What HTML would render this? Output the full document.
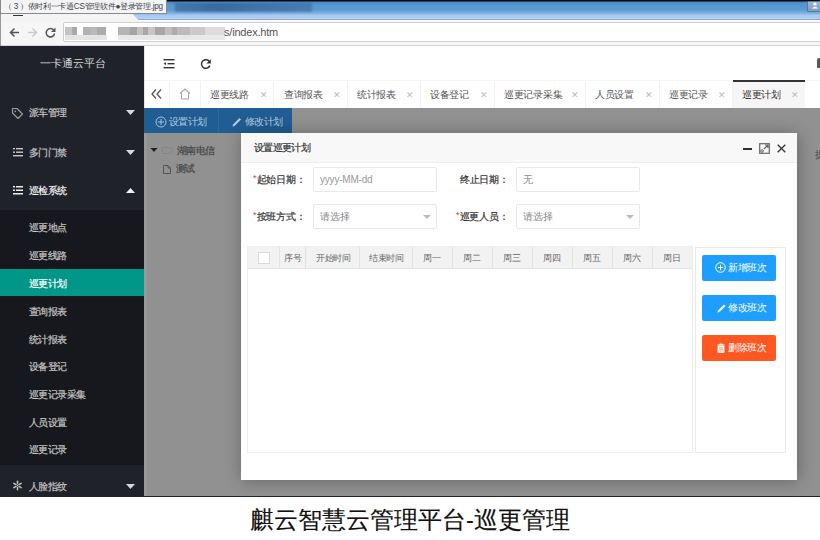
<!DOCTYPE html>
<html><head><meta charset="utf-8">
<style>
*{margin:0;padding:0;box-sizing:border-box}
html,body{width:820px;height:540px;overflow:hidden;background:#fff;font-family:"Liberation Sans",sans-serif;color:#333}
.a{position:absolute;white-space:nowrap}
#titlebar{left:0;top:0;width:820px;height:21px;background:linear-gradient(#05080f 0,#05080f 1px,#4a88c0 2px,#5797cf 5px,#5a9bd2 10px,#7db0e0 13px,#a9c9f0 15.5px,#b2cff5 18.5px,#93a8cc 19.5px,#f8fafc 20.5px)}
#ctab{left:0;top:13px;width:140px;height:9px;background:#f4f4f4;clip-path:polygon(0 0,132px 0,140px 100%,0 100%)}
#tip{left:0;top:0;width:167px;height:14px;background:#f4f4f6;border:1px solid #8a8a8a;border-top:none;font-size:8.2px;line-height:14px;color:#444;padding-left:3px;letter-spacing:-0.3px}
#btool{left:0;top:21px;width:820px;height:25px;background:#f6f6f6;border-bottom:1px solid #d4d4d4}
#addr{left:63px;top:22px;width:770px;height:20px;background:#fff;border:1px solid #cfcfcf;border-radius:2px}
#side{left:0;top:46px;width:144px;height:450px;background:#20222a}
#sub{left:0;top:210px;width:144px;height:255px;background:#17181d}
#hdr{left:144px;top:46px;width:676px;height:34px;background:#fff}
#tabs{left:144px;top:80px;width:676px;height:28px;background:#fff;border-top:1px solid #f6f6f6}
#content{left:144px;top:108px;width:676px;height:388px;background:#919191}
#modal{left:241px;top:133px;width:556px;height:347px;background:#fff;box-shadow:1px 1px 16px rgba(0,0,0,.3)}
#bottomline{left:0;top:496px;width:820px;height:1px;background:#222}
#caption{left:0px;top:505px;width:820px;text-align:center;font-size:23.5px;line-height:30px;color:#111;-webkit-text-stroke:0.15px #111}
.st{font-size:10px;letter-spacing:-0.6px;line-height:12px;color:#c4c4c4;-webkit-text-stroke:0.2px currentColor}
.nb{-webkit-text-stroke:0}
.tt{font-size:10px;letter-spacing:-0.3px;line-height:12px;color:#555}
.tx{font-size:9px;color:#bbb;line-height:10px}
.dv{width:1px;height:27px;top:81px;background:#f2f2f2}
.fl{font-size:10px;letter-spacing:-0.3px;line-height:12px;color:#333;-webkit-text-stroke:0.2px #333}
.rq{color:#e33;font-size:9px;margin-right:0.5px;position:relative;top:-2px;-webkit-text-stroke:0}
.inp{width:124px;height:25px;border:1px solid #e9e9e9;border-radius:2px;background:#fff;font-size:10px;line-height:23px;padding-left:6px;letter-spacing:-0.2px}
.cd{top:247px;width:1px;height:22px;background:#e2e2e2}
.th{top:252px;font-size:8.8px;letter-spacing:-0.5px;line-height:12px;color:#666}
.btn{width:74px;height:26px;border-radius:2px;color:#fff;font-size:10px;letter-spacing:-0.3px}
.btn span{position:absolute;top:7px;line-height:12px}
</style></head><body>
<div id="titlebar" class="a"></div>
<div class="a" style="left:807px;top:1px;width:14px;height:11px;background:linear-gradient(#9db8d6,#7f9ec2);border:1px solid #5d7796;border-radius:1px"></div>
<svg class="a" style="left:811px;top:2px" width="8" height="7" viewBox="0 0 8 7"><circle cx="4" cy="2" r="1.6" fill="#fff"/><path d="M0.8 6.5 Q4 2.8 7.2 6.5 Z" fill="#fff"/></svg>
<div class="a" style="left:175px;top:3px;width:137px;height:9px;background:linear-gradient(90deg,rgba(30,60,110,.35),rgba(30,60,110,.5) 30%,rgba(30,60,110,.4) 60%,rgba(30,60,110,.3));filter:blur(1.2px)"></div>
<div id="btool" class="a"></div>
<div id="ctab" class="a"></div>
<div id="tip" class="a">（ 3 ）依时利一卡通CS管理软件●登录管理.jpg</div>
<div class="a" style="left:13px;top:15px;width:10px;height:1px;background:#333"></div>
<div class="a" style="left:0;top:14px;width:1px;height:32px;background:#9a9a9a"></div>
<div id="addr" class="a"></div>
<!-- browser toolbar icons -->
<svg class="a" style="left:9px;top:27px" width="11" height="11" viewBox="0 0 11 11"><path d="M10 5.5 H1.5 M5.5 1.5 L1.5 5.5 L5.5 9.5" fill="none" stroke="#555" stroke-width="1.5"/></svg>
<svg class="a" style="left:27px;top:27px" width="11" height="11" viewBox="0 0 11 11"><path d="M1 5.5 H9.5 M5.5 1.5 L9.5 5.5 L5.5 9.5" fill="none" stroke="#ccc" stroke-width="1.5"/></svg>
<svg class="a" style="left:45px;top:27px" width="11" height="11" viewBox="0 0 11 11"><path d="M9 3.5 A4.2 4.2 0 1 0 9.6 6.5" fill="none" stroke="#555" stroke-width="1.5"/><path d="M10.5 0.5 L10.5 5 L6 5 Z" fill="#555"/></svg>
<div class="a" style="left:65px;top:27px;width:7px;height:8px;background:#c4c4c4"></div><div class="a" style="left:72px;top:27px;width:5px;height:8px;background:#a9a9a9"></div><div class="a" style="left:83px;top:27px;width:7px;height:8px;background:#b2b2b2"></div><div class="a" style="left:90px;top:27px;width:7px;height:8px;background:#bababa"></div><div class="a" style="left:97px;top:27px;width:9px;height:8px;background:#acacac"></div><div class="a" style="left:118px;top:27px;width:12px;height:8px;background:#b4b4b4"></div><div class="a" style="left:130px;top:27px;width:7px;height:8px;background:#a4a4a4"></div><div class="a" style="left:137px;top:27px;width:6px;height:8px;background:#c2c2c2"></div><div class="a" style="left:143px;top:27px;width:5px;height:8px;background:#a8a8a8"></div><div class="a" style="left:148px;top:27px;width:7px;height:8px;background:#c6c6c6"></div><div class="a" style="left:155px;top:27px;width:10px;height:8px;background:#a6a6a6"></div><div class="a" style="left:165px;top:27px;width:7px;height:8px;background:#c0c0c0"></div><div class="a" style="left:172px;top:27px;width:5px;height:8px;background:#acacac"></div><div class="a" style="left:177px;top:27px;width:13px;height:8px;background:#bcbcbc"></div><div class="a" style="left:190px;top:27px;width:15px;height:8px;background:#cacaca"></div><div class="a" style="left:205px;top:27px;width:20px;height:8px;background:#dcdcdc"></div><div class="a" style="left:65px;top:35px;width:42px;height:5px;background:#e4e4e4"></div><div class="a" style="left:118px;top:35px;width:107px;height:5px;background:#e8e8e8"></div>
<div class="a" style="left:224px;top:26px;font-size:11px;line-height:13px;color:#555;letter-spacing:-0.2px">s/index.htm</div>


<!-- sidebar -->
<div id="side" class="a"></div>
<div id="sub" class="a"></div>
<div class="a" style="left:0;top:269px;width:144px;height:27px;background:#009688"></div>
<div class="a st nb" style="left:40px;top:57px;font-size:11px;letter-spacing:-0.1px;color:#d8d8d8">一卡通云平台</div>
<div class="a st" style="left:29px;top:107px">派车管理</div>
<div class="a st" style="left:29px;top:147px">多门门禁</div>
<div class="a st" style="left:29px;top:185px;color:#f0f0f0">巡检系统</div>
<div class="a st" style="left:29px;top:222px">巡更地点</div>
<div class="a st" style="left:29px;top:250px">巡更线路</div>
<div class="a st" style="left:29px;top:278px;color:#fff">巡更计划</div>
<div class="a st" style="left:29px;top:306px">查询报表</div>
<div class="a st" style="left:29px;top:334px">统计报表</div>
<div class="a st" style="left:29px;top:361px">设备登记</div>
<div class="a st" style="left:29px;top:389px">巡更记录采集</div>
<div class="a st" style="left:29px;top:417px">人员设置</div>
<div class="a st" style="left:29px;top:444px">巡更记录</div>
<div class="a st" style="left:29px;top:481px">人脸指纹</div>


<!-- sidebar icons -->
<svg class="a" style="left:11px;top:107px" width="13" height="12" viewBox="0 0 13 12"><path d="M1.5 1.5 L6 1.5 L11.5 7 L7 11.5 L1.5 6 Z" fill="none" stroke="#9a9a9a" stroke-width="1.2" stroke-linejoin="round"/><circle cx="4.3" cy="4.3" r="0.9" fill="#9a9a9a"/></svg>
<svg class="a" style="left:13px;top:147px" width="10" height="10" viewBox="0 0 10 10"><rect x="0" y="1" width="2" height="1.4" fill="#c8c8c8"/><rect x="3" y="1" width="7" height="1.4" fill="#c8c8c8"/><rect x="0" y="4.5" width="2" height="1.4" fill="#c8c8c8"/><rect x="3" y="4.5" width="7" height="1.4" fill="#c8c8c8"/><rect x="0" y="8" width="10" height="1.4" fill="#c8c8c8"/></svg>
<svg class="a" style="left:13px;top:185px" width="10" height="10" viewBox="0 0 10 10"><rect x="0" y="1" width="2" height="1.5" fill="#eee"/><rect x="3" y="1" width="7" height="1.5" fill="#eee"/><rect x="0" y="4.5" width="2" height="1.5" fill="#eee"/><rect x="3" y="4.5" width="7" height="1.5" fill="#eee"/><rect x="0" y="8" width="10" height="1.5" fill="#eee"/></svg>
<svg class="a" style="left:12px;top:480px" width="11" height="11" viewBox="-5.5 -5.5 11 11"><g stroke="#c4c4c4" stroke-width="1.5" stroke-linecap="round"><path d="M0 -4.2 V4.2"/><path d="M-3.64 -2.1 L3.64 2.1"/><path d="M-3.64 2.1 L3.64 -2.1"/></g><circle r="1.3" fill="#20222a"/><circle r="0.7" fill="#c4c4c4"/></svg>
<svg class="a" style="left:126px;top:110px" width="9" height="5"><path d="M0 0 L9 0 L4.5 5 Z" fill="#d8d8d8"/></svg>
<svg class="a" style="left:126px;top:150px" width="9" height="5"><path d="M0 0 L9 0 L4.5 5 Z" fill="#d8d8d8"/></svg>
<svg class="a" style="left:126px;top:188px" width="9" height="5"><path d="M0 5 L9 5 L4.5 0 Z" fill="#f0f0f0"/></svg>
<svg class="a" style="left:126px;top:484px" width="9" height="5"><path d="M0 0 L9 0 L4.5 5 Z" fill="#d8d8d8"/></svg>

<!-- header -->
<div id="hdr" class="a"></div>
<div id="tabs" class="a"></div>
<div class="a" style="left:144px;top:46px;width:1px;height:62px;background:#e6e6e6"></div>
<svg class="a" style="left:163px;top:59px" width="12" height="10" viewBox="0 0 12 10"><rect x="0.5" y="0" width="11" height="1.4" fill="#333"/><rect x="4.5" y="4" width="7" height="1.4" fill="#333"/><path d="M0.5 4.7 L3 3.3 L3 6.1 Z" fill="#333"/><rect x="0.5" y="8" width="11" height="1.4" fill="#333"/></svg>
<svg class="a" style="left:200px;top:58px" width="12" height="12" viewBox="0 0 12 12"><path d="M9.6 4 A4.3 4.3 0 1 0 9.8 7.6" fill="none" stroke="#333" stroke-width="1.5"/><path d="M10.8 1.2 L10.8 5.6 L6.4 5.6 Z" fill="#333"/></svg>
<div class="a" style="left:817px;top:58px;width:4px;height:10px;background:#5a5a5a;border-radius:2px 0 0 0"></div>
<svg class="a" style="left:151px;top:89px" width="11" height="10" viewBox="0 0 11 10"><path d="M5 0.5 L1 5 L5 9.5 M10 0.5 L6 5 L10 9.5" fill="none" stroke="#555" stroke-width="1.3"/></svg>
<svg class="a" style="left:179px;top:88px" width="12" height="12" viewBox="0 0 12 12"><path d="M1 5.5 L6 1 L11 5.5 M2.5 4.5 V11 H9.5 V4.5" fill="none" stroke="#a8a8a8" stroke-width="1.1"/></svg>
<div class="dv a" style="left:169px"></div>
<div class="dv a" style="left:200px"></div>
<div class="dv a" style="left:273px"></div>
<div class="dv a" style="left:347px"></div>
<div class="dv a" style="left:420px"></div>
<div class="dv a" style="left:494px"></div>
<div class="dv a" style="left:585px"></div>
<div class="dv a" style="left:659px"></div>
<div class="dv a" style="left:732px"></div>
<div class="a tx" style="left:260px;top:90px">✕</div>
<div class="a tx" style="left:333px;top:90px">✕</div>
<div class="a tx" style="left:406px;top:90px">✕</div>
<div class="a tx" style="left:480px;top:90px">✕</div>
<div class="a tx" style="left:571px;top:90px">✕</div>
<div class="a tx" style="left:645px;top:90px">✕</div>
<div class="a tx" style="left:718px;top:90px">✕</div>

<div class="a tt" style="left:210px;top:89px">巡更线路</div>
<div class="a tt" style="left:284px;top:89px">查询报表</div>
<div class="a tt" style="left:357px;top:89px">统计报表</div>
<div class="a tt" style="left:430px;top:89px">设备登记</div>
<div class="a tt" style="left:504px;top:89px">巡更记录采集</div>
<div class="a tt" style="left:595px;top:89px">人员设置</div>
<div class="a tt" style="left:669px;top:89px">巡更记录</div>
<div class="a" style="left:733px;top:80px;width:72px;height:28px;background:#f6f6f6;border-top:2px solid #333"></div>
<div class="a tt" style="left:742px;top:89px;color:#333">巡更计划</div>
<div class="a tx" style="left:791px;top:90px">✕</div>

<!-- content -->
<div id="content" class="a"></div>
<div class="a" style="left:144px;top:133px;width:3px;height:363px;background:#979797"></div>
<div class="a" style="left:144px;top:108px;width:148px;height:25px;background:#1f5d92"></div>
<div class="a" style="left:218px;top:108px;width:1px;height:25px;background:#2a6aa0"></div>
<svg class="a" style="left:155px;top:116px" width="12" height="12" viewBox="0 0 12 12"><circle cx="6" cy="6" r="5" fill="none" stroke="#a9c4dc" stroke-width="1"/><path d="M6 3 V9 M3 6 H9" stroke="#a9c4dc" stroke-width="1"/></svg>
<div class="a st nb" style="left:169px;top:116px;color:#b8cde0">设置计划</div>
<svg class="a" style="left:231px;top:116px" width="12" height="12" viewBox="0 0 12 12"><path d="M1.5 10.5 L2 8.5 L8.5 2 L10 3.5 L3.5 10 Z" fill="#b8cde0"/></svg>
<div class="a st nb" style="left:245px;top:116px;color:#b8cde0">修改计划</div>
<svg class="a" style="left:150px;top:148px" width="8" height="4"><path d="M0.5 0 L7.5 0 L4 4 Z" fill="#222"/></svg>
<svg class="a" style="left:162px;top:147px" width="11" height="7" viewBox="0 0 11 7"><path d="M0.5 0.5 H6.5 Q10.5 0.5 10.5 3.5 Q10.5 6.5 6.5 6.5 H0.5 Z" fill="none" stroke="#858585" stroke-width="1"/></svg>
<div class="a st" style="left:177px;top:145px;color:#444">湖南电信</div>
<svg class="a" style="left:163px;top:165px" width="8" height="9" viewBox="0 0 8 9"><path d="M0.5 0.5 H5 L7.5 3 V8.5 H0.5 Z M5 0.5 V3 H7.5" fill="none" stroke="#555" stroke-width="1"/></svg>
<div class="a st" style="left:176px;top:163px;color:#444">测试</div>
<div class="a st nb" style="left:815px;top:149px;color:#444">提</div>

<div id="modal" class="a"></div>
<div class="a" style="left:241px;top:133px;width:556px;height:30px;background:#f8f8f8;border-bottom:1px solid #eee"></div>
<div class="a" style="left:254px;top:142px;font-size:10px;letter-spacing:-0.7px;line-height:12px;color:#333;-webkit-text-stroke:0.2px #333">设置巡更计划</div>
<div class="a" style="left:743px;top:148px;width:9px;height:2px;background:#2f2f2f"></div>
<svg class="a" style="left:759px;top:143px" width="11" height="11" viewBox="0 0 11 11"><rect x="0.7" y="0.7" width="9.6" height="9.6" fill="none" stroke="#666" stroke-width="1.2"/><path d="M5 6 L9 2 M6 2 H9 V5" fill="none" stroke="#666" stroke-width="1.2"/><circle cx="3" cy="8" r="1.3" fill="none" stroke="#666" stroke-width="1"/></svg>
<svg class="a" style="left:777px;top:144px" width="9" height="9" viewBox="0 0 9 9"><path d="M0.7 0.7 L8.3 8.3 M8.3 0.7 L0.7 8.3" stroke="#333" stroke-width="1.3"/></svg>

<div class="a fl" style="left:253px;top:174px"><span class="rq">*</span>起始日期：</div>
<div class="a inp" style="left:313px;top:167px"><span style="color:#999">yyyy-MM-dd</span></div>
<div class="a fl" style="left:460px;top:174px">终止日期：</div>
<div class="a inp" style="left:516px;top:167px"><span style="color:#888">无</span></div>
<div class="a fl" style="left:253px;top:211px"><span class="rq">*</span>按班方式：</div>
<div class="a inp" style="left:313px;top:204px"><span style="color:#888">请选择</span></div>
<svg class="a" style="left:423px;top:215px" width="8" height="4"><path d="M0 0 L8 0 L4 4 Z" fill="#bbb"/></svg>
<div class="a fl" style="left:456px;top:211px"><span class="rq">*</span>巡更人员：</div>
<div class="a inp" style="left:516px;top:204px"><span style="color:#888">请选择</span></div>
<svg class="a" style="left:626px;top:215px" width="8" height="4"><path d="M0 0 L8 0 L4 4 Z" fill="#bbb"/></svg>

<div class="a" style="left:247px;top:246px;width:446px;height:207px;border:1px solid #ededed;background:#fff"></div>
<div class="a" style="left:248px;top:247px;width:444px;height:22px;background:#f2f2f2;border-bottom:1px solid #e6e6e6"></div>
<div class="a" style="left:258px;top:252px;width:12px;height:12px;background:#fff;border:1px solid #d8d8d8"></div>
<div class="a cd" style="left:279px"></div>
<div class="a cd" style="left:305px"></div>
<div class="a cd" style="left:359px"></div>
<div class="a cd" style="left:412px"></div>
<div class="a cd" style="left:452px"></div>
<div class="a cd" style="left:492px"></div>
<div class="a cd" style="left:532px"></div>
<div class="a cd" style="left:572px"></div>
<div class="a cd" style="left:612px"></div>
<div class="a cd" style="left:652px"></div>
<div class="a th" style="left:284px">序号</div>
<div class="a th" style="left:316px">开始时间</div>
<div class="a th" style="left:369px">结束时间</div>
<div class="a th" style="left:423px">周一</div>
<div class="a th" style="left:463px">周二</div>
<div class="a th" style="left:503px">周三</div>
<div class="a th" style="left:543px">周四</div>
<div class="a th" style="left:583px">周五</div>
<div class="a th" style="left:623px">周六</div>
<div class="a th" style="left:663px">周日</div>

<div class="a" style="left:695px;top:247px;width:91px;height:206px;border:1px solid #eaeaea;background:#fff"></div>
<div class="a btn" style="left:702px;top:255px;background:#1e9fff"><svg width="11" height="11" viewBox="0 0 11 11" style="position:absolute;left:13px;top:7px"><circle cx="5.5" cy="5.5" r="4.8" fill="none" stroke="#fff" stroke-width="1"/><path d="M5.5 2.8 V8.2 M2.8 5.5 H8.2" stroke="#fff" stroke-width="1"/></svg><span style="left:26px">新增班次</span></div>
<div class="a btn" style="left:702px;top:295px;background:#1e9fff"><svg width="10" height="10" viewBox="0 0 10 10" style="position:absolute;left:15px;top:8px"><path d="M0.5 9.5 L1 7.5 L7 1.5 L8.5 3 L2.5 9 Z" fill="#fff"/></svg><span style="left:26px">修改班次</span></div>
<div class="a btn" style="left:702px;top:335px;background:#ff5722"><svg width="10" height="10" viewBox="0 0 10 10" style="position:absolute;left:14px;top:8px"><path d="M1 2 H9 M3.5 2 V1 H6.5 V2 M2 3 H8 V9.5 H2 Z" fill="#fff" stroke="#fff" stroke-width="0.8"/><path d="M4 4 V8.5 M6 4 V8.5" stroke="#ff5722" stroke-width="0.7"/></svg><span style="left:26px">删除班次</span></div>

<div id="bottomline" class="a"></div>
<div id="caption" class="a">麒云智慧云管理平台-巡更管理</div>
</body></html>
